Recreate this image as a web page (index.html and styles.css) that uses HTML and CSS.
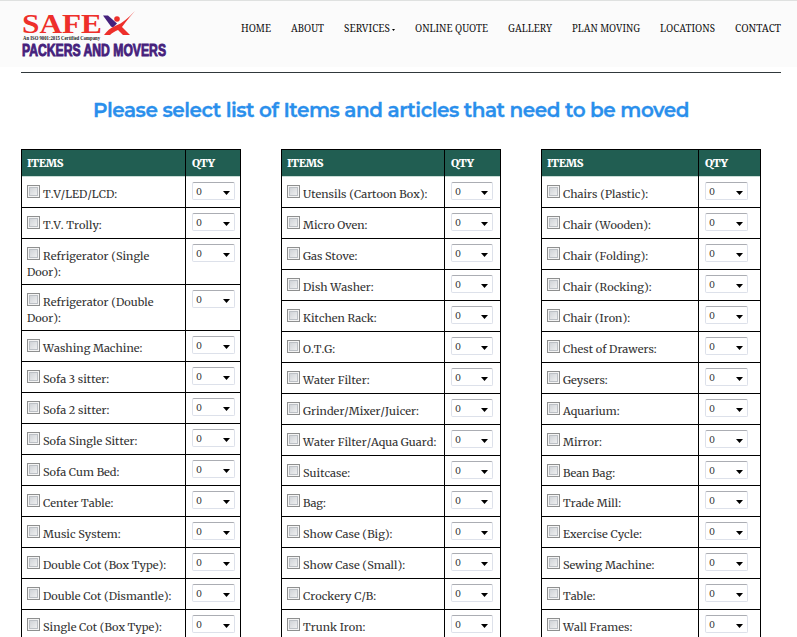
FILE: index.html
```
<!DOCTYPE html>
<html lang="en">
<head>
<meta charset="utf-8">
<title>Safex Packers and Movers</title>
<link rel="stylesheet" href="styles.css">
</head>
<body>
<header class="site-header">
  <svg class="logo" width="147" height="50" viewBox="0 0 147 50" role="img">
    <text class="logo-name" x="1" y="21.500" textLength="80" lengthAdjust="spacingAndGlyphs">SAFE</text>
    <path fill="#45217c" d="M82 4.500h5l9 8-4 4-2-1z"/>
    <path fill="#ee2f2a" d="M114 0C107 8 104 12 101 16l8 8h-7l-5-5c-3 1-6 3-8 5h-6c3-4 6-7 11-9 8-3 13-8 20-15z"/>
    <circle cx="96" cy="8" r="2.800" fill="#ee2f2a"/>
    <text class="logo-note" x="2" y="29.300" textLength="77" lengthAdjust="spacingAndGlyphs">An ISO 9001:2015 Certified Company</text>
    <text class="logo-sub" x="1" y="44.500" textLength="144" lengthAdjust="spacingAndGlyphs">PACKERS AND MOVERS</text>
  </svg>
  <nav class="nav" id="nav"></nav>
</header>
<main class="page">
  <h1 class="title">Please select list of Items and articles that need to be moved</h1>
  <div class="lists" id="lists"></div>
</main>
<script src="app.js"></script>
</body>
</html>
```
FILE: styles.css
```
* { box-sizing: border-box; }
body { margin: 0; height: 637px; overflow: hidden; background: #fff; color: #333; font-family: Merriweather, "DejaVu Serif", serif; }
.site-header { height: 67px; padding: 10px 16px 0 21px; display: flex; justify-content: space-between; background: #fbfbfb; border-top: 1px solid #dfe1e0; }
.logo { flex: none; display: block; overflow: visible; }
.logo-name { font: bold 27px "Liberation Serif", serif; fill: #ee2f2a; }
.logo-note { font: bold 5.500px "Liberation Serif", serif; fill: #222; }
.logo-sub { font: bold 16.500px "Liberation Sans", sans-serif; fill: #45217c; stroke: #45217c; stroke-width: .9px; }
.nav { display: flex; gap: 20px; padding-top: 10px; margin-right: .5px; }
.nav-text { display: block; height: 16px; overflow: visible; }
.nav-text text { font: 11.500px "Noto Serif", "DejaVu Serif", serif; fill: #111; }
.page { margin: 5px 16px 0 21px; border-top: 1px solid #30383b; }
.title { margin: 0; padding: 24px 0 0 72px; height: 76px; font: 600 20px/27px Montserrat, "Open Sans", sans-serif; letter-spacing: -.49px; -webkit-text-stroke: .3px #2a8fec; color: #2a8fec; white-space: nowrap; }
.lists { display: flex; gap: 40px; }
.list { width: 220px; border: 1px solid #000; flex: none; }
.row { display: grid; height: 31px; border-bottom: 1px solid #000; }
.row.tall { height: 46px; }
.middle .row:nth-child(11), .right .row:nth-child(11) { height: 30px; }
.head { height: 27px; border-bottom: 1px solid #c9dcd6; background: #215e52; color: #fff; font-weight: 900; font-size: 11px; }
.left .row { grid-template-columns: 164px 1fr; }
.middle .row { grid-template-columns: 163px 1fr; }
.right .row { grid-template-columns: 157px 1fr; }
.item { border-right: 1px solid #000; padding: 8px 0 0 5px; font-size: 11px; line-height: 16px; letter-spacing: .04px; font-kerning: none; white-space: nowrap; }
.head .item, .head .qty { padding-top: 0; letter-spacing: -.4px; line-height: 27px; font-kerning: auto; }
.check { display: inline-block; width: 13px; height: 13px; border: 1px solid #8e8f8f; background: linear-gradient(135deg, #c8ccd1, #f6f6f6); box-shadow: inset 0 0 0 1px #f4f4f4, inset 0 0 0 2px #bcc0c5; margin-right: 3px; }
.qty { padding: 5px 0 0 6px; }
.select { width: 43px; height: 18px; border: 1px solid #dde1ea; border-top-color: #abadb3; border-radius: 2px; padding: 0 4px 0 3px; display: flex; justify-content: space-between; font: 9.500px/17px "DejaVu Serif", serif; }
.middle .select { width: 42px; }
.arrow { width: 7px; height: 4px; margin-top: 8px; background: #000; clip-path: polygon(0 0, 100% 0, 50% 100%); }
```
FILE: app.js
```
const nav = [["HOME", 30], ["ABOUT", 33], ["SERVICES", 51], ["ONLINE QUOTE", 73], ["GALLERY", 44], ["PLAN MOVING", 68], ["LOCATIONS", 55], ["CONTACT", 46]];
document.getElementById("nav").innerHTML = nav.map(([t, w]) =>
  `<svg class="nav-text" width="${w}"><text y="11" textLength="${t === "SERVICES" ? 46 : w}" lengthAdjust="spacingAndGlyphs">${t}</text>${t === "SERVICES" ? '<path d="M48 8h3l-1.500 2z"/>' : ""}</svg>`).join("");
const lists = {
  left: ["T.V/LED/LCD:", "T.V. Trolly:", "Refrigerator (Single<br>Door):", "Refrigerator (Double<br>Door):", "Washing Machine:", "Sofa 3 sitter:", "Sofa 2 sitter:", "Sofa Single Sitter:", "Sofa Cum Bed:", "Center Table:", "Music System:", "Double Cot (Box Type):", "Double Cot (Dismantle):", "Single Cot (Box Type):"],
  middle: ["Utensils (Cartoon Box):", "Micro Oven:", "Gas Stove:", "Dish Washer:", "Kitchen Rack:", "O.T.G:", "Water Filter:", "Grinder/Mixer/Juicer:", "Water Filter/Aqua Guard:", "Suitcase:", "Bag:", "Show Case (Big):", "Show Case (Small):", "Crockery C/B:", "Trunk Iron:"],
  right: ["Chairs (Plastic):", "Chair (Wooden):", "Chair (Folding):", "Chair (Rocking):", "Chair (Iron):", "Chest of Drawers:", "Geysers:", "Aquarium:", "Mirror:", "Bean Bag:", "Trade Mill:", "Exercise Cycle:", "Sewing Machine:", "Table:", "Wall Frames:"]
};
document.getElementById("lists").innerHTML = Object.entries(lists).map(([side, items]) =>
  `<section class="list ${side}"><div class="row head"><div class="item">ITEMS</div><div class="qty">QTY</div></div>` +
  items.map(t => `<div class="row${t.includes("<br>") ? " tall" : ""}"><div class="item"><span class="check"></span>${t}</div><div class="qty"><div class="select">0<i class="arrow"></i></div></div></div>`).join("") +
  "</section>").join("");
```
